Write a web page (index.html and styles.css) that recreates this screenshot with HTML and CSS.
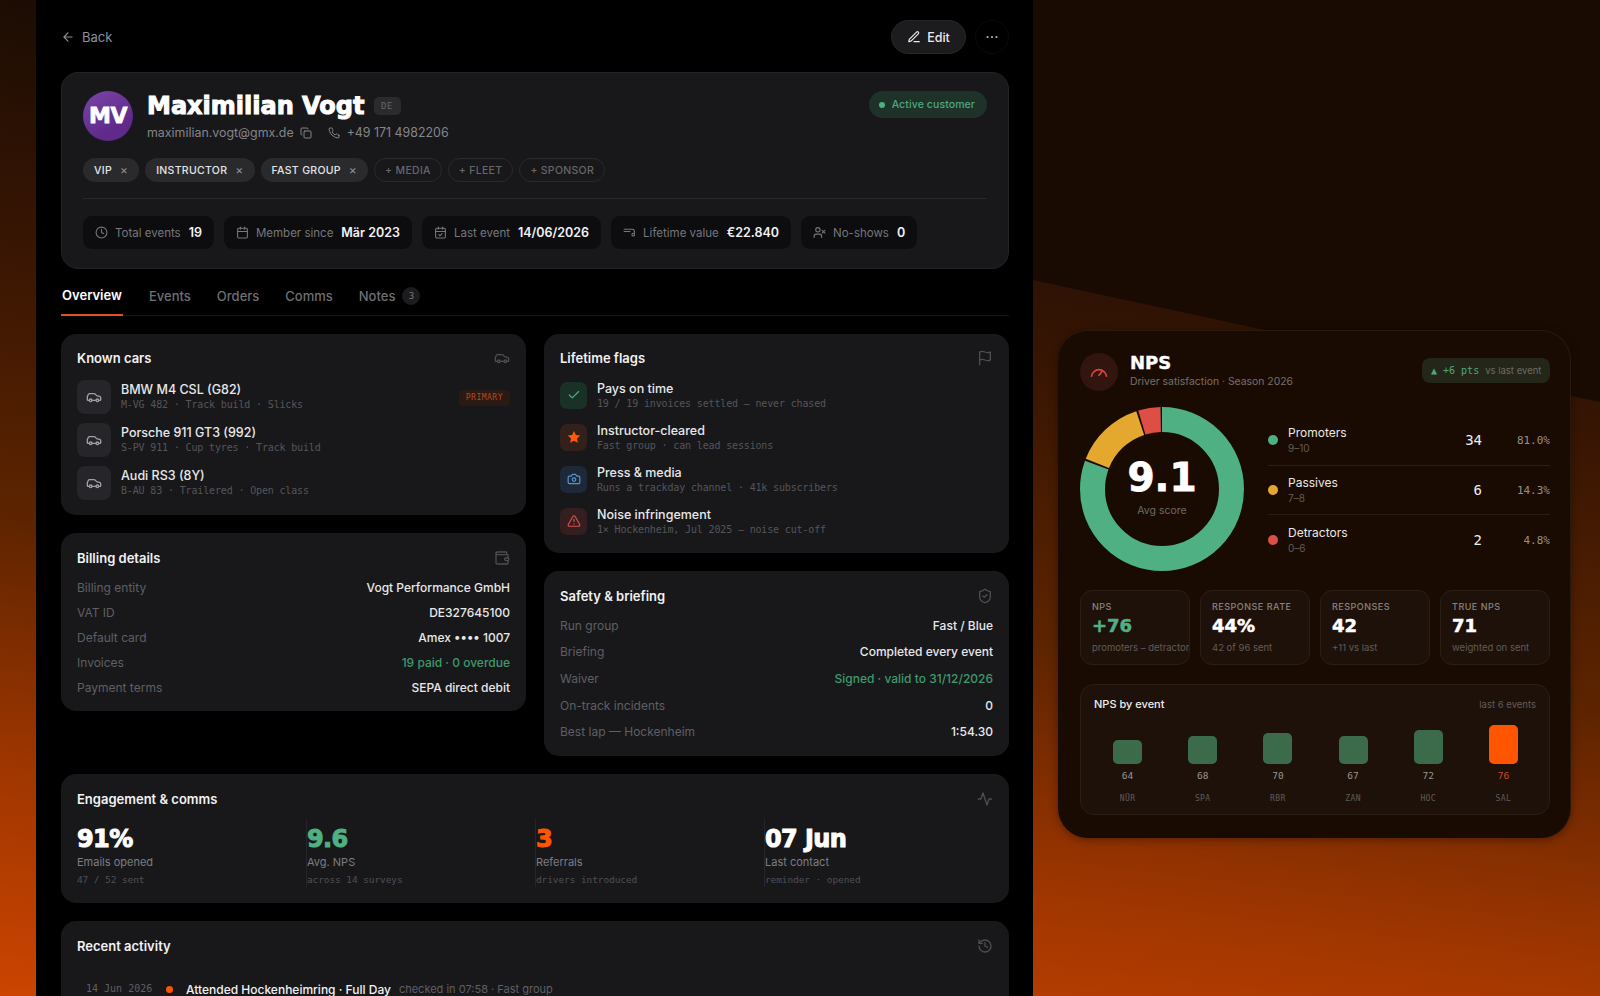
FILE: index.html
```html
<!DOCTYPE html>
<html lang="en">
<head>
    <meta charset="UTF-8">
    <meta name="viewport" content="width=device-width, initial-scale=1.0">
    <title>Maximilian Vogt</title>
    <link rel="stylesheet" href="styles.css">
</head>
<body>
    <svg class="sprite" aria-hidden="true">
        <symbol id="i-back" viewBox="0 0 24 24"><path d="M12 19l-7-7 7-7M19 12H5"/></symbol>
        <symbol id="i-edit" viewBox="0 0 24 24"><path d="M12 20h9"/><path d="M16.376 3.622a1 1 0 0 1 3.002 3.002L7.368 18.635a2 2 0 0 1-.855.506l-2.872.838a.5.5 0 0 1-.62-.62l.838-2.872a2 2 0 0 1 .506-.854z"/></symbol>
        <symbol id="i-copy" viewBox="0 0 24 24"><rect x="8" y="8" width="14" height="14" rx="2"/><path d="M4 16c-1.1 0-2-.9-2-2V4c0-1.1.9-2 2-2h10c1.1 0 2 .9 2 2"/></symbol>
        <symbol id="i-phone" viewBox="0 0 24 24"><path d="M22 16.92v3a2 2 0 0 1-2.18 2 19.79 19.79 0 0 1-8.63-3.07 19.5 19.5 0 0 1-6-6 19.79 19.79 0 0 1-3.07-8.67A2 2 0 0 1 4.11 2h3a2 2 0 0 1 2 1.72 12.84 12.84 0 0 0 .7 2.81 2 2 0 0 1-.45 2.11L8.09 9.91a16 16 0 0 0 6 6l1.27-1.27a2 2 0 0 1 2.11-.45 12.84 12.84 0 0 0 2.81.7A2 2 0 0 1 22 16.92z"/></symbol>
        <symbol id="i-clock" viewBox="0 0 24 24"><circle cx="12" cy="12" r="10"/><path d="M12 6v6l4 2"/></symbol>
        <symbol id="i-cal" viewBox="0 0 24 24"><rect x="3" y="4" width="18" height="18" rx="2"/><path d="M16 2v4M8 2v4M3 10h18"/></symbol>
        <symbol id="i-cal-check" viewBox="0 0 24 24"><rect x="3" y="4" width="18" height="18" rx="2"/><path d="M16 2v4M8 2v4M3 10h18M9 16l2 2 4-4"/></symbol>
        <symbol id="i-value" viewBox="0 0 24 24"><path d="M2 6h15a4 4 0 0 1 4 4v3"/><path d="M2 10h11"/><circle cx="19" cy="16" r="2.5"/></symbol>
        <symbol id="i-user-x" viewBox="0 0 24 24"><path d="M16 21v-2a4 4 0 0 0-4-4H6a4 4 0 0 0-4 4v2"/><circle cx="9" cy="7" r="4"/><path d="M17 8l5 5M22 8l-5 5"/></symbol>
        <symbol id="i-car" viewBox="0 0 24 24"><path d="M19 17h2c.6 0 1-.4 1-1v-3c0-.9-.7-1.7-1.5-1.9C18.7 10.6 16 10 16 10s-1.3-1.4-2.2-2.3c-.5-.4-1.1-.7-1.8-.7H5c-.6 0-1.1.4-1.4.9l-1.4 2.9A3.7 3.7 0 0 0 2 12v4c0 .6.4 1 1 1h2"/><circle cx="7" cy="17" r="2"/><path d="M9 17h6"/><circle cx="17" cy="17" r="2"/></symbol>
        <symbol id="i-wallet" viewBox="0 0 24 24"><path d="M19 7V4a1 1 0 0 0-1-1H5a2 2 0 0 0 0 4h15a1 1 0 0 1 1 1v4h-3a2 2 0 0 0 0 4h3a1 1 0 0 0 1-1v-2a1 1 0 0 0-1-1"/><path d="M3 5v14a2 2 0 0 0 2 2h15a1 1 0 0 0 1-1v-4"/></symbol>
        <symbol id="i-flag" viewBox="0 0 24 24"><path d="M4 15s1-1 4-1 5 2 8 2 4-1 4-1V3s-1 1-4 1-5-2-8-2-4 1-4 1zM4 22v-7"/></symbol>
        <symbol id="i-shield" viewBox="0 0 24 24"><path d="M20 13c0 5-3.5 7.5-7.66 8.95a1 1 0 0 1-.67-.01C7.5 20.5 4 18 4 13V6a1 1 0 0 1 1-1c2 0 4.5-1.2 6.24-2.72a1.17 1.17 0 0 1 1.52 0C14.51 3.81 17 5 19 5a1 1 0 0 1 1 1z"/><path d="M9 12l2 2 4-4"/></symbol>
        <symbol id="i-check" viewBox="0 0 24 24"><path d="M20 6L9 17l-5-5"/></symbol>
        <symbol id="i-camera" viewBox="0 0 24 24"><path d="M14.5 4h-5L7 7H4a2 2 0 0 0-2 2v9a2 2 0 0 0 2 2h16a2 2 0 0 0 2-2V9a2 2 0 0 0-2-2h-3l-2.5-3z"/><circle cx="12" cy="13" r="3"/></symbol>
        <symbol id="i-alert" viewBox="0 0 24 24"><path d="M21.73 18l-8-14a2 2 0 0 0-3.48 0l-8 14A2 2 0 0 0 4 21h16a2 2 0 0 0 1.73-3"/><path d="M12 9v4M12 17h.01"/></symbol>
        <symbol id="i-activity" viewBox="0 0 24 24"><path d="M22 12h-4l-3 9L9 3l-3 9H2"/></symbol>
        <symbol id="i-history" viewBox="0 0 24 24"><path d="M3 12a9 9 0 1 0 9-9 9.75 9.75 0 0 0-6.74 2.74L3 8"/><path d="M3 3v5h5M12 7v5l4 2"/></symbol>
    </svg>

    <div class="backdrop"></div>

    <main class="profile">
        <div class="topbar">
            <a class="back"><svg class="ico ico-14"><use href="#i-back"/></svg>Back</a>
            <div class="top-actions">
                <button class="btn-edit"><svg class="ico ico-14"><use href="#i-edit"/></svg>Edit</button>
                <button class="btn-more">
                    <svg width="14" height="14" viewBox="0 0 14 14" fill="#b5b5b8"><circle cx="2.5" cy="7" r="1.1"/><circle cx="7" cy="7" r="1.1"/><circle cx="11.5" cy="7" r="1.1"/></svg>
                </button>
            </div>
        </div>

        <section class="hero">
            <div class="hero-top">
                <div class="avatar">MV</div>
                <div class="hero-id">
                    <div class="hero-name"><h1>Maximilian Vogt</h1><span class="country">DE</span></div>
                    <div class="hero-contact">
                        <span>maximilian.vogt@gmx.de</span>
                        <svg class="ico ico-12 copy"><use href="#i-copy"/></svg>
                        <svg class="ico ico-12 phone"><use href="#i-phone"/></svg>
                        <span>+49 171 4982206</span>
                    </div>
                </div>
                <span class="status"><i></i>Active customer</span>
            </div>
            <div class="tags">
                <span class="tag">VIP<b>×</b></span>
                <span class="tag">INSTRUCTOR<b>×</b></span>
                <span class="tag">FAST GROUP<b>×</b></span>
                <span class="tag tag-add">+ MEDIA</span>
                <span class="tag tag-add">+ FLEET</span>
                <span class="tag tag-add">+ SPONSOR</span>
            </div>
            <div class="stats">
                <div class="stat"><svg class="ico ico-13"><use href="#i-clock"/></svg>Total events<strong>19</strong></div>
                <div class="stat"><svg class="ico ico-13"><use href="#i-cal"/></svg>Member since<strong>Mär 2023</strong></div>
                <div class="stat"><svg class="ico ico-13"><use href="#i-cal-check"/></svg>Last event<strong>14/06/2026</strong></div>
                <div class="stat"><svg class="ico ico-13"><use href="#i-value"/></svg>Lifetime value<strong>€22.840</strong></div>
                <div class="stat"><svg class="ico ico-13"><use href="#i-user-x"/></svg>No-shows<strong>0</strong></div>
            </div>
        </section>

        <nav class="tabs">
            <a class="active">Overview</a>
            <a>Events</a>
            <a>Orders</a>
            <a>Comms</a>
            <a>Notes<span class="count">3</span></a>
        </nav>

        <div class="columns">
            <div class="stack">
                <section class="card cars">
                    <header class="card-head"><h2>Known cars</h2><svg class="ico ico-16"><use href="#i-car"/></svg></header>
                    <div class="car">
                        <span class="car-ico"><svg class="ico ico-16"><use href="#i-car"/></svg></span>
                        <div class="item-text"><div class="item-name">BMW M4 CSL (G82)</div><div class="item-sub">M-VG 482 · Track build · Slicks</div></div>
                        <span class="primary">PRIMARY</span>
                    </div>
                    <div class="car">
                        <span class="car-ico"><svg class="ico ico-16"><use href="#i-car"/></svg></span>
                        <div class="item-text"><div class="item-name">Porsche 911 GT3 (992)</div><div class="item-sub">S-PV 911 · Cup tyres · Track build</div></div>
                    </div>
                    <div class="car">
                        <span class="car-ico"><svg class="ico ico-16"><use href="#i-car"/></svg></span>
                        <div class="item-text"><div class="item-name">Audi RS3 (8Y)</div><div class="item-sub">B-AU 83 · Trailered · Open class</div></div>
                    </div>
                </section>

                <section class="card billing">
                    <header class="card-head"><h2>Billing details</h2><svg class="ico ico-16"><use href="#i-wallet"/></svg></header>
                    <div class="kv"><span>Billing entity</span><span>Vogt Performance GmbH</span></div>
                    <div class="kv"><span>VAT ID</span><span>DE327645100</span></div>
                    <div class="kv"><span>Default card</span><span>Amex •••• 1007</span></div>
                    <div class="kv"><span>Invoices</span><span class="good">19 paid · 0 overdue</span></div>
                    <div class="kv"><span>Payment terms</span><span>SEPA direct debit</span></div>
                </section>
            </div>

            <div class="stack">
                <section class="card flags">
                    <header class="card-head"><h2>Lifetime flags</h2><svg class="ico ico-16"><use href="#i-flag"/></svg></header>
                    <div class="flag">
                        <span class="flag-ico flag-green"><svg class="ico ico-14"><use href="#i-check"/></svg></span>
                        <div class="item-text"><div class="item-name">Pays on time</div><div class="item-sub">19 / 19 invoices settled — never chased</div></div>
                    </div>
                    <div class="flag">
                        <span class="flag-ico flag-orange"><svg width="14" height="14" viewBox="0 0 24 24" fill="#ff5a0a"><path d="M12 1.5l3.2 6.9 7.5.9-5.5 5.2 1.4 7.5L12 18.3l-6.6 3.7 1.4-7.5L1.3 9.300l7.5-.9z"/></svg></span>
                        <div class="item-text"><div class="item-name">Instructor-cleared</div><div class="item-sub">Fast group · can lead sessions</div></div>
                    </div>
                    <div class="flag">
                        <span class="flag-ico flag-blue"><svg class="ico ico-14"><use href="#i-camera"/></svg></span>
                        <div class="item-text"><div class="item-name">Press &amp; media</div><div class="item-sub">Runs a trackday channel · 41k subscribers</div></div>
                    </div>
                    <div class="flag">
                        <span class="flag-ico flag-red"><svg class="ico ico-14"><use href="#i-alert"/></svg></span>
                        <div class="item-text"><div class="item-name">Noise infringement</div><div class="item-sub">1× Hockenheim, Jul 2025 — noise cut-off</div></div>
                    </div>
                </section>

                <section class="card safety">
                    <header class="card-head"><h2>Safety &amp; briefing</h2><svg class="ico ico-16"><use href="#i-shield"/></svg></header>
                    <div class="kv"><span>Run group</span><span>Fast / Blue</span></div>
                    <div class="kv"><span>Briefing</span><span>Completed every event</span></div>
                    <div class="kv"><span>Waiver</span><span class="good">Signed · valid to 31/12/2026</span></div>
                    <div class="kv"><span>On-track incidents</span><span>0</span></div>
                    <div class="kv"><span>Best lap — Hockenheim</span><span>1:54.30</span></div>
                </section>
            </div>
        </div>

        <section class="card engage">
            <header class="card-head"><h2>Engagement &amp; comms</h2><svg class="ico ico-16"><use href="#i-activity"/></svg></header>
            <div class="metrics">
                <div class="metric"><div class="metric-val">91%</div><div class="metric-label">Emails opened</div><div class="metric-sub">47 / 52 sent</div></div>
                <div class="metric"><div class="metric-val val-green">9.6</div><div class="metric-label">Avg. NPS</div><div class="metric-sub">across 14 surveys</div></div>
                <div class="metric"><div class="metric-val val-orange">3</div><div class="metric-label">Referrals</div><div class="metric-sub">drivers introduced</div></div>
                <div class="metric"><div class="metric-val">07 Jun</div><div class="metric-label">Last contact</div><div class="metric-sub">reminder · opened</div></div>
            </div>
        </section>

        <section class="card activity">
            <header class="card-head"><h2>Recent activity</h2><svg class="ico ico-16"><use href="#i-history"/></svg></header>
            <div class="event">
                <span class="event-date">14 Jun 2026</span>
                <i></i>
                <span class="event-name">Attended Hockenheimring · Full Day</span>
                <span class="event-note">checked in 07:58 · Fast group</span>
            </div>
        </section>
    </main>

    <aside class="side">
        <section class="nps">
            <header class="nps-head">
                <span class="nps-ico">
                    <svg width="20" height="20" viewBox="0 0 24 24" fill="none" stroke="#d9453f" stroke-width="2" stroke-linecap="round"><path d="M3 17a9.100 9.100 0 0 1 18 0"/><path d="M12 16l3.500-4.500"/></svg>
                </span>
                <div class="nps-title"><h2>NPS</h2><p>Driver satisfaction · Season 2026</p></div>
                <div class="trend"><b>▲ +6 pts</b><span>vs last event</span></div>
            </header>

            <div class="nps-summary">
                <div class="donut">
                    <svg width="164" height="164" viewBox="0 0 164 164" fill="none" stroke-width="25">
                        <circle cx="82" cy="82" r="69.5" stroke="#4fb084" pathLength="100" stroke-dasharray="80.6 19.4" transform="rotate(-90 82 82)"/>
                        <circle cx="82" cy="82" r="69.5" stroke="#e5a82e" pathLength="100" stroke-dasharray="13.9 86.1" stroke-dashoffset="-81" transform="rotate(-90 82 82)"/>
                        <circle cx="82" cy="82" r="69.5" stroke="#dd4f45" pathLength="100" stroke-dasharray="4.4 95.6" stroke-dashoffset="-95.3" transform="rotate(-90 82 82)"/>
                    </svg>
                    <div class="donut-center"><strong>9.1</strong><span>Avg score</span></div>
                </div>
                <div class="legend">
                    <div class="legend-row">
                        <i class="dot-green"></i>
                        <div class="legend-name">Promoters<small>9–10</small></div>
                        <span class="legend-num">34</span><span class="legend-pct">81.0%</span>
                    </div>
                    <div class="legend-row">
                        <i class="dot-yellow"></i>
                        <div class="legend-name">Passives<small>7–8</small></div>
                        <span class="legend-num">6</span><span class="legend-pct">14.3%</span>
                    </div>
                    <div class="legend-row">
                        <i class="dot-red"></i>
                        <div class="legend-name">Detractors<small>0–6</small></div>
                        <span class="legend-num">2</span><span class="legend-pct">4.8%</span>
                    </div>
                </div>
            </div>

            <div class="kpis">
                <div class="kpi"><label>NPS</label><strong class="val-green">+76</strong><span>promoters – detractors</span></div>
                <div class="kpi"><label>RESPONSE RATE</label><strong>44%</strong><span>42 of 96 sent</span></div>
                <div class="kpi"><label>RESPONSES</label><strong>42</strong><span>+11 vs last</span></div>
                <div class="kpi"><label>TRUE NPS</label><strong>71</strong><span>weighted on sent</span></div>
            </div>

            <div class="chart">
                <div class="chart-head"><h3>NPS by event</h3><span>last 6 events</span></div>
                <div class="bars">
                    <div class="bar-col"><div class="bar" style="height:24px"></div><b>64</b><span>NÜR</span></div>
                    <div class="bar-col"><div class="bar" style="height:28px"></div><b>68</b><span>SPA</span></div>
                    <div class="bar-col"><div class="bar" style="height:31px"></div><b>70</b><span>RBR</span></div>
                    <div class="bar-col"><div class="bar" style="height:28px"></div><b>67</b><span>ZAN</span></div>
                    <div class="bar-col"><div class="bar" style="height:34px"></div><b>72</b><span>HOC</span></div>
                    <div class="bar-col now"><div class="bar" style="height:39px"></div><b>76</b><span>SAL</span></div>
                </div>
            </div>
        </section>
    </aside>
</body>
</html>
```

FILE: styles.css
```css
* {
    box-sizing: border-box;
}

html, body {
    height: 996px;
    overflow: hidden;
}

body {
    margin: 0;
    display: flex;
    position: relative;
    padding-left: 36px;
    font-family: Inter, "Noto Sans", sans-serif;
    font-size: 12px;
    color: #ececee;
    background: linear-gradient(187deg, #1a0c03 15%, #3a1603 38%, #5e2400 60%, #a03600 81%, #cc4400 100%);
}

.sprite {
    display: none;
}

/* dark wedge behind the NPS card */
.backdrop {
    position: absolute;
    top: 0;
    left: 1033px;
    right: 0;
    height: 402px;
    background: #1a0b02;
    clip-path: polygon(0 0, 100% 0, 100% 100%, 0 280px);
}

.ico {
    fill: none;
    stroke: currentColor;
    stroke-width: 2;
    stroke-linecap: round;
    stroke-linejoin: round;
    flex: none;
}

.ico-12 { width: 12px; height: 12px; }
.ico-13 { width: 13px; height: 13px; }
.ico-14 { width: 14px; height: 14px; }
.ico-16 { width: 16px; height: 16px; }

h1, h2, h3, p {
    margin: 0;
}

/* main column */
.profile {
    position: relative;
    width: 997px;
    flex: none;
    height: 996px;
    padding: 20px 24px 0 25px;
    background: #000;
    overflow: hidden;
}

.topbar {
    height: 34px;
    display: flex;
    align-items: center;
    justify-content: space-between;
    margin-bottom: 18px;
}

.back {
    display: flex;
    align-items: center;
    gap: 7px;
    color: #8f8f94;
    font-size: 13px;
}

.top-actions {
    display: flex;
    gap: 9px;
}

.btn-edit {
    height: 34px;
    width: 75px;
    display: flex;
    align-items: center;
    justify-content: center;
    gap: 6px;
    border: 1px solid #262628;
    border-radius: 17px;
    background: #1c1c1e;
    color: #ececee;
    font: 500 12.5px Inter, sans-serif;
}

.btn-more {
    width: 34px;
    height: 34px;
    display: flex;
    align-items: center;
    justify-content: center;
    padding: 0;
    border: 1px solid #0b0b0c;
    border-radius: 50%;
    background: #000;
}

/* header card */
.hero {
    height: 197px;
    padding: 18px 21px 0;
    border: 1px solid #232326;
    border-radius: 17px;
    background: #18181b;
}

.hero-top {
    display: flex;
    height: 50px;
}

.avatar {
    width: 50px;
    height: 50px;
    margin-right: 14px;
    border-radius: 50%;
    background: linear-gradient(150deg, #7b45a8, #5f2a8a 70%);
    color: #fff;
    font: 700 22px/50px "DejaVu Sans", sans-serif;
    text-align: center;
    letter-spacing: -.5px;
    -webkit-text-stroke: .8px #fff;
}

.hero-id {
    flex: 1;
}

.hero-name {
    display: flex;
    align-items: center;
    gap: 9px;
    height: 26px;
    margin: 2px 0 5px;
}

.hero-name h1 {
    font: 700 24px/26px "DejaVu Sans", sans-serif;
    color: #fff;
    -webkit-text-stroke: 1px #fff;
}

.country {
    width: 27px;
    height: 18px;
    border-radius: 5px;
    background: #2b2b2e;
    color: #66666b;
    font: 9px/18px "DejaVu Sans Mono", monospace;
    letter-spacing: .5px;
    text-align: center;
}

.hero-contact {
    display: flex;
    align-items: center;
    color: #85858a;
    font-size: 12.4px;
    line-height: 18px;
}

.copy {
    margin: 0 16px 0 6px;
}

.phone {
    margin-right: 7px;
}

.status {
    height: 27px;
    padding: 0 12px 0 10px;
    display: flex;
    align-items: center;
    gap: 7px;
    border-radius: 14px;
    background: #1f3229;
    color: #4fa67d;
    font-size: 10.5px;
    font-weight: 500;
    letter-spacing: .1px;
}

.status i {
    width: 6px;
    height: 6px;
    border-radius: 50%;
    background: #4fb084;
}

.tags {
    display: flex;
    gap: 6px;
    margin-top: 17px;
    padding-bottom: 16px;
    border-bottom: 1px solid #29292c;
}

.tag {
    height: 24px;
    padding: 0 11px;
    display: flex;
    align-items: center;
    border-radius: 12px;
    background: #2a2a2d;
    color: #e5e5e7;
    font-size: 10.5px;
    font-weight: 500;
    letter-spacing: .3px;
}

.tag b {
    margin-left: 8px;
    padding-bottom: 1px;
    color: #8f8f94;
    font-size: 12px;
    line-height: 1;
    font-weight: 400;
}

.tag-add {
    padding: 0 10px;
    border: 1px solid #2a2a2d;
    background: transparent;
    color: #66666b;
}

.stats {
    display: flex;
    gap: 10px;
    margin-top: 17px;
}

.stat {
    height: 33px;
    padding: 0 12px;
    display: flex;
    align-items: center;
    border-radius: 9px;
    background: #0d0d0f;
    color: #77777c;
    font-size: 11.5px;
}

.stat svg {
    margin-right: 7px;
}

.stat strong {
    margin-left: 8px;
    color: #f2f2f3;
    font-size: 12.5px;
    font-weight: 600;
}

/* tabs */
.tabs {
    display: flex;
    gap: 26px;
    height: 47px;
    border-bottom: 1px solid #17171a;
    margin-bottom: 18px;
    font-size: 13px;
    color: #6f6f74;
}

.tabs a {
    display: flex;
    align-items: center;
    height: 47px;
    padding-top: 6px;
    font-weight: 500;
}

.tabs .active {
    width: 62px;
    justify-content: center;
    color: #fff;
    font-weight: 600;
    border-bottom: 2px solid #e0531a;
}

.count {
    width: 18px;
    height: 18px;
    margin-left: 7px;
    border-radius: 50%;
    background: #1c1c1f;
    color: #77777c;
    font: 9px/18px "DejaVu Sans Mono", monospace;
    text-align: center;
}

/* cards */
.columns {
    display: grid;
    grid-template-columns: 465px 465px;
    gap: 18px;
    align-items: start;
}

.stack {
    display: flex;
    flex-direction: column;
    gap: 18px;
}

.card {
    padding: 16px;
    border-radius: 15px;
    background: #18181b;
}

.card-head {
    display: flex;
    align-items: center;
    justify-content: space-between;
    height: 16px;
    margin: 1px 0 12px;
    color: #4d4d52;
}

.card-head h2 {
    color: #f2f2f3;
    font-size: 13px;
    font-weight: 600;
}

.item-text {
    flex: 1;
}

.item-name {
    color: #e8e8ea;
    font-size: 12.5px;
    font-weight: 500;
    line-height: 17px;
}

.item-sub {
    color: #55555a;
    font: 10px/14px "DejaVu Sans Mono", monospace;
    letter-spacing: -.15px;
    white-space: nowrap;
}

.cars {
    height: 181px;
}

.cars .card-head {
    margin: 0 0 14px;
}

.car {
    display: flex;
    align-items: center;
    gap: 10px;
    height: 34px;
    margin-bottom: 9px;
}

.car .item-text {
    margin-top: -2px;
}

.car-ico {
    width: 34px;
    height: 34px;
    display: flex;
    align-items: center;
    justify-content: center;
    border-radius: 8px;
    background: #26262a;
    color: #a0a0a5;
}

.primary {
    height: 16px;
    margin-top: 1px;
    padding: 0 7px;
    border-radius: 4px;
    background: #2b1a13;
    color: #b8471d;
    font: 8px/16px "DejaVu Sans Mono", monospace;
    letter-spacing: .5px;
}

.kv {
    display: flex;
    align-items: center;
    justify-content: space-between;
    font-size: 12px;
    color: #5f5f64;
}

.kv span:last-child {
    color: #e8e8ea;
    font-weight: 500;
}

.kv span.good:last-child {
    color: #3f9a6c;
}

.billing {
    height: 178px;
}

.billing .card-head {
    margin-bottom: 9px;
}

.billing .kv {
    height: 25px;
}

.flags {
    height: 219px;
}

.flags .card-head {
    margin: 0 0 13px;
}

.flag {
    display: flex;
    align-items: center;
    gap: 10px;
    height: 32px;
    margin-bottom: 10px;
}

.flag-ico {
    width: 27px;
    height: 27px;
    display: flex;
    align-items: center;
    justify-content: center;
    border-radius: 7px;
}

.flag-green { background: #1a3128; color: #4fb084; }
.flag-orange { background: #33201a; }
.flag-blue { background: #1d2838; color: #5b94d1; }
.flag-red { background: #351e20; color: #d9514a; }

.safety {
    height: 185px;
}

.safety .card-head {
    margin-bottom: 8px;
}

.safety .kv {
    height: 26.6px;
}

.engage {
    height: 129px;
    margin-top: 18px;
}

.metrics {
    display: grid;
    grid-template-columns: repeat(4, 229px);
    margin-top: 3px;
}

.metric {
    height: 68px;
    padding-top: 7px;
    border-left: 1px solid #26262a;
}

.metric:first-child {
    border-left: 0;
}

.metric-val {
    height: 26px;
    color: #fff;
    font: 700 24px/26px "DejaVu Sans", sans-serif;
    letter-spacing: -.6px;
    -webkit-text-stroke: 1px currentColor;
}

.metric-val.val-green { color: #4fb084; }
.metric-val.val-orange { color: #ff5500; }

.metric-label {
    margin-top: 2px;
    color: #7d7d82;
    font-size: 11px;
    line-height: 16px;
}

.metric-sub {
    margin-top: 3px;
    color: #4f4f54;
    font: 9.5px/14px "DejaVu Sans Mono", monospace;
    letter-spacing: -.1px;
}

.activity {
    height: 200px;
    margin-top: 18px;
}

.event {
    display: flex;
    align-items: center;
    margin-top: 27px;
    padding-left: 9px;
    height: 16px;
}

.event-date {
    width: 80px;
    color: #5f5f64;
    font: 10px/16px "DejaVu Sans Mono", monospace;
}

.event i {
    width: 7px;
    height: 7px;
    margin-right: 13px;
    border-radius: 50%;
    background: #ff5500;
}

.event-name {
    color: #f2f2f3;
    font-size: 12px;
    font-weight: 500;
    margin-right: 8px;
}

.event-note {
    color: #5f5f64;
    font-size: 11px;
}

/* NPS widget on the right */
.side {
    position: relative;
    flex: 1;
    min-width: 0;
    padding: 330px 29px 0 25px;
}

.nps {
    height: 508px;
    padding: 21px 20px 0 22px;
    border-radius: 30px;
    background: #1a0b02;
    box-shadow: 0 2px 8px rgba(0, 0, 0, .35);
    border-top: 1px solid #2a1a0e;
    border-right: 1px solid #2a1a0e;
}

.nps-head {
    display: flex;
    align-items: center;
    height: 39px;
}

.nps-ico {
    width: 38px;
    height: 38px;
    margin-right: 12px;
    display: flex;
    align-items: center;
    justify-content: center;
    border-radius: 50%;
    background: #331510;
}

.nps-title {
    flex: 1;
    margin-top: -3px;
}

.nps-title h2 {
    color: #fff;
    font: 700 18px/22px "DejaVu Sans", sans-serif;
    -webkit-text-stroke: .4px #fff;
}

.nps-title p {
    color: #77706b;
    font-size: 10.4px;
    line-height: 15px;
}

.trend {
    height: 25px;
    width: 128px;
    margin-top: -2px;
    padding: 0 9px;
    display: flex;
    align-items: center;
    gap: 6px;
    border-radius: 8px;
    background: #24261a;
    white-space: nowrap;
}

.trend b {
    color: #4fa67d;
    font: 10px "DejaVu Sans Mono", monospace;
}

.trend span {
    color: #6e6a63;
    font-size: 9.5px;
}

.nps-summary {
    display: flex;
    margin-top: 16px;
}

.donut {
    position: relative;
    width: 164px;
    height: 164px;
    flex: none;
}

.donut-center {
    position: absolute;
    inset: 0;
    display: flex;
    flex-direction: column;
    align-items: center;
    padding-top: 48px;
}

.donut-center strong {
    height: 46px;
    color: #fff;
    font: 700 39px/46px "DejaVu Sans", sans-serif;
    -webkit-text-stroke: .8px #fff;
}

.donut-center span {
    margin-top: 2px;
    color: #6e6a63;
    font-size: 10.5px;
    line-height: 16px;
}

.legend {
    flex: 1;
    margin-left: 24px;
    padding-top: 9px;
}

.legend-row {
    display: flex;
    align-items: center;
    height: 49.7px;
    border-bottom: 1px solid #2a1d14;
}

.legend-row:last-child {
    border-bottom: 0;
}

.legend-row i {
    width: 10px;
    height: 10px;
    margin-right: 10px;
    border-radius: 50%;
}

.dot-green { background: #4fb084; }
.dot-yellow { background: #e5a82e; }
.dot-red { background: #dd4f45; }

.legend-name {
    flex: 1;
    color: #ece8e4;
    font-size: 12px;
    line-height: 16px;
}

.legend-name small {
    display: block;
    color: #625c56;
    font-size: 10px;
    line-height: 14px;
}

.legend-num {
    color: #f0eeea;
    font: 14px "DejaVu Sans Mono", monospace;
}

.legend-pct {
    width: 68px;
    text-align: right;
    color: #96908a;
    font: 11px "DejaVu Sans Mono", monospace;
}

.kpis {
    display: grid;
    grid-template-columns: repeat(4, 110px);
    gap: 10px;
    margin-top: 19px;
}

.kpi {
    height: 75px;
    padding: 10px 0 0 11px;
    border: 1px solid #2b1e14;
    border-radius: 12px;
    background: #1e110a;
    overflow: hidden;
    white-space: nowrap;
}

.kpi label,
.kpi strong,
.kpi span {
    display: block;
}

.kpi label {
    color: #8a837d;
    font-size: 9px;
    line-height: 11px;
    letter-spacing: .5px;
    font-weight: 500;
}

.kpi strong {
    margin-top: 2px;
    color: #fff;
    font: 700 18px/23px "DejaVu Sans", sans-serif;
    -webkit-text-stroke: .5px currentColor;
}

.kpi strong.val-green {
    color: #4fb084;
}

.kpi span {
    margin-top: 4px;
    color: #625c56;
    font-size: 9.5px;
    line-height: 14px;
}

.chart {
    height: 131px;
    margin-top: 19px;
    padding: 11px 13px 0;
    border: 1px solid #2b1e14;
    border-radius: 14px;
    background: #1e110a;
}

.chart-head {
    display: flex;
    align-items: center;
    justify-content: space-between;
    height: 16px;
}

.chart-head h3 {
    color: #f0eeea;
    font-size: 11px;
    font-weight: 500;
}

.chart-head span {
    color: #625c56;
    font-size: 9.5px;
}

.bars {
    display: grid;
    grid-template-columns: repeat(6, 1fr);
    margin: 0 -5px 0 -4px;
}

.bar-col {
    height: 94px;
    display: flex;
    flex-direction: column;
    justify-content: flex-end;
    align-items: center;
}

.bar {
    width: 29px;
    border-radius: 5px;
    background: #3c6b4c;
}

.bar-col b {
    margin-top: 5px;
    color: #9a948e;
    font: 9.5px/14px "DejaVu Sans Mono", monospace;
}

.bar-col span {
    margin-top: 9px;
    color: #625c56;
    font: 8px/14px "DejaVu Sans Mono", monospace;
    letter-spacing: .4px;
}

.now .bar {
    background: #ff5500;
}

.now b {
    color: #c9472a;
}
```
